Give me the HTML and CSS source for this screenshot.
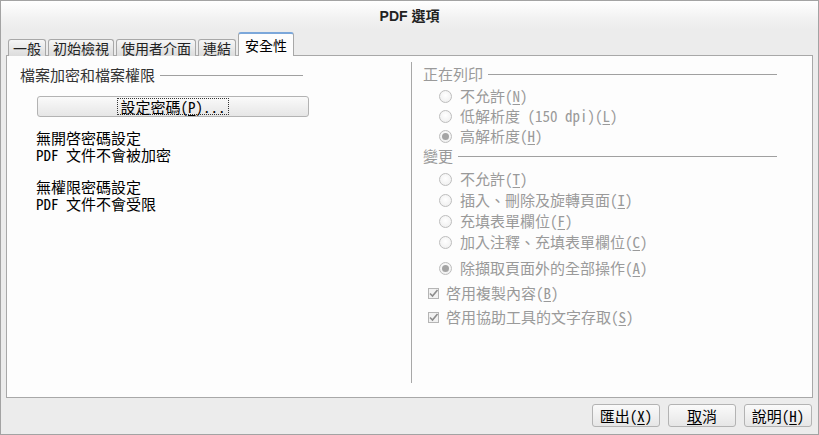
FILE: index.html
```html
<!DOCTYPE html>
<html lang="zh-Hant">
<head>
<meta charset="utf-8">
<title>PDF 選項</title>
<link rel="stylesheet" href="styles.css">
</head>
<body>
<div class="window">
  <div class="titlebar"><span class="title">PDF 選項</span></div>
  <div class="content">
    <div class="tabs">
      <div class="tab">一般</div>
      <div class="tab">初始檢視</div>
      <div class="tab">使用者介面</div>
      <div class="tab">連結</div>
      <div class="tab active">安全性</div>
    </div>
    <div class="panel">
      <div class="col-left">
        <div class="group-head dark"><span>檔案加密和檔案權限</span><span class="rule"></span></div>
        <button class="btn wide"><span class="focus">設定密碼(<u>P</u>)...</span></button>
        <div class="note"><div class="line">無開啓密碼設定</div><div class="line">PDF 文件不會被加密</div></div>
        <div class="note second"><div class="line">無權限密碼設定</div><div class="line">PDF 文件不會受限</div></div>
      </div>
      <div class="col-right">
        <div class="group-head"><span>正在列印</span><span class="rule"></span></div>
        <div class="opts first">
          <div class="opt"><span class="radio"></span>不允許(<u>N</u>)</div>
          <div class="opt"><span class="radio"></span>低解析度 (150 dpi)(<u>L</u>)</div>
          <div class="opt"><span class="radio on"></span>高解析度(<u>H</u>)</div>
        </div>
        <div class="group-head"><span>變更</span><span class="rule"></span></div>
        <div class="opts change">
          <div class="opt"><span class="radio"></span>不允許(<u>T</u>)</div>
          <div class="opt"><span class="radio"></span>插入、刪除及旋轉頁面(<u>I</u>)</div>
          <div class="opt"><span class="radio"></span>充填表單欄位(<u>F</u>)</div>
          <div class="opt"><span class="radio"></span>加入注釋、充填表單欄位(<u>C</u>)</div>
          <div class="opt gap"><span class="radio on"></span>除擷取頁面外的全部操作(<u>A</u>)</div>
        </div>
        <div class="check c1"><span class="box"><svg width="11" height="11" viewBox="0 0 11 11"><path d="M2 5.5 L4.5 8 L9.5 2" fill="none" stroke="#8c8c8c" stroke-width="1.6"/></svg></span>啓用複製內容(<u>B</u>)</div>
        <div class="check c2"><span class="box"><svg width="11" height="11" viewBox="0 0 11 11"><path d="M2 5.5 L4.5 8 L9.5 2" fill="none" stroke="#8c8c8c" stroke-width="1.6"/></svg></span>啓用協助工具的文字存取(<u>S</u>)</div>
      </div>
    </div>
    <div class="footer">
      <button class="btn small">匯出(<u>X</u>)</button>
      <button class="btn small"><u>取</u>消</button>
      <button class="btn small">說明(<u>H</u>)</button>
    </div>
  </div>
</div>
</body>
</html>
```
FILE: styles.css
```css
html, body {
  margin: 0;
  padding: 0;
  background: #ececec;
}
body {
  font-family: "Noto Sans Mono CJK TC", "Noto Sans CJK TC", "Noto Sans", sans-serif;
  font-size: 15px;
  color: #000;
}
.window {
  width: 819px;
  height: 435px;
  box-sizing: border-box;
  border: 1px solid #a3a3a3;
  background: #ececec;
  display: flex;
  flex-direction: column;
}
.titlebar {
  height: 28px;
  background: linear-gradient(#ffffff, #f2f2f2 60%, #ececec);
  display: flex;
  align-items: center;
  justify-content: center;
}
.title {
  font-family: "Liberation Sans", "Noto Sans CJK TC", sans-serif;
  font-weight: bold;
  font-size: 14px;
  color: #222;
  line-height: 16px;
  margin-top: 1px;
}
.content {
  padding: 0 5px;
  display: flex;
  flex-direction: column;
  flex: 1;
}
.tabs {
  margin-top: 4px;
  margin-left: 2px;
  height: 23px;
  display: flex;
  align-items: flex-end;
  gap: 2px;
  margin-bottom: -1px;
  position: relative;
  z-index: 1;
}
.tab {
  height: 17px;
  box-sizing: border-box;
  padding: 0 4px;
  border: 1px solid #a8a8a8;
  border-bottom: none;
  border-radius: 3px 3px 0 0;
  background: linear-gradient(#f6f6f6, #dcdcdc);
  font-family: "Noto Sans CJK TC", sans-serif;
  font-size: 14px;
  line-height: 16px;
  color: #222;
}
.tab.active {
  height: 24px;
  padding: 2px 6px 0;
  background: #fdfdfd;
  border-color: #a8a8a8;
  border-top: 2px solid #7ba7da;
  line-height: 18px;
  color: #000;
}
.panel {
  height: 343px;
  box-sizing: border-box;
  border: 1px solid #a8a8a8;
  background: #fdfdfd;
  display: flex;
}
.col-left {
  width: 404px;
  box-sizing: border-box;
  padding: 9px 102px 0 13px;
}
.col-right {
  flex: 1;
  margin: 6px 0 14px;
  border-left: 1px solid #a8a8a8;
  padding: 2px 35px 0 11px;
  color: #9a9a9a;
}
.group-head {
  display: flex;
  align-items: center;
  height: 20px;
  line-height: 20px;
}
.group-head.dark {
  color: #333;
  margin-right: 6px;
}
.rule {
  flex: 1;
  height: 1px;
  background: #a0a0a0;
  margin-left: 5px;
}
.btn {
  font-family: inherit;
  font-size: 15px;
  color: #000;
  background: linear-gradient(#fafafa, #e6e6e6);
  border: 1px solid #b3b3b3;
  border-radius: 3px;
  padding: 0;
  box-sizing: border-box;
  display: flex;
  align-items: center;
  justify-content: center;
}
.btn.wide {
  margin: 11px 0 0 17px;
  width: 272px;
  height: 21px;
  line-height: 17px;
}
.focus {
  border: 1px dotted #333;
  padding: 0 2px;
  line-height: 15px;
}
.note {
  margin: 12px 0 0 16px;
}
.line {
  line-height: 17px;
}
.note.second {
  margin-top: 15px;
}
.opts {
  display: flex;
  flex-direction: column;
}
.opts.first {
  margin-top: 2px;
}
.opts.change {
  margin-top: 3px;
  gap: 1px;
}
.opt {
  display: flex;
  align-items: center;
  height: 20px;
  line-height: 20px;
  padding-left: 16px;
}
.opt.gap {
  margin-top: 5px;
}
.radio {
  width: 13px;
  height: 13px;
  box-sizing: border-box;
  border: 1px solid #bdbdbd;
  border-radius: 50%;
  background: radial-gradient(circle at 50% 40%, #ffffff, #ececec);
  margin-right: 8px;
  display: inline-flex;
  align-items: center;
  justify-content: center;
}
.radio.on::after {
  content: "";
  width: 7px;
  height: 7px;
  border-radius: 50%;
  background: #a4a4a4;
}
.check {
  display: flex;
  align-items: center;
  height: 20px;
  line-height: 20px;
  padding-left: 5px;
}
.check.c1 {
  margin-top: 5px;
}
.check.c2 {
  margin-top: 4px;
}
.box {
  width: 11px;
  height: 11px;
  box-sizing: border-box;
  border: 1px solid #b5b5b5;
  background: #f2f2f2;
  margin-right: 7px;
  display: inline-flex;
  align-items: center;
  justify-content: center;
}
.box svg {
  flex: none;
}
.footer {
  display: flex;
  justify-content: flex-end;
  gap: 8px;
  padding: 6px 1px 0 0;
}
.btn.small {
  width: 68px;
  height: 23px;
  line-height: 19px;
}
u {
  text-underline-offset: 2px;
}
```
